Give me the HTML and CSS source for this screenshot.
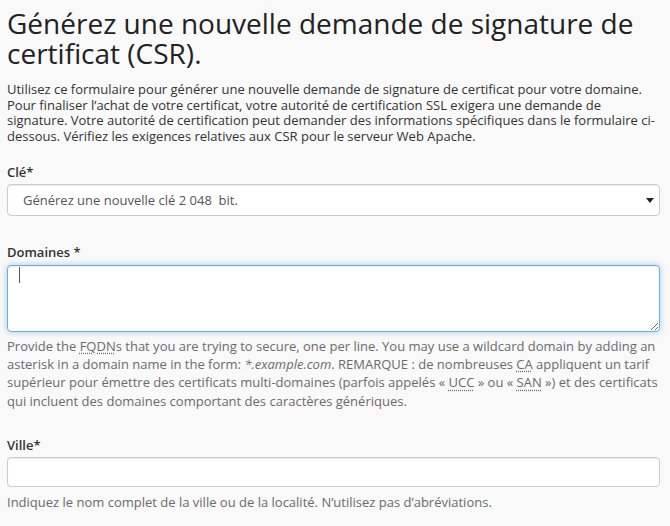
FILE: index.html
```html
<!DOCTYPE html>
<html lang="fr">
<head>
<meta charset="utf-8">
<title>CSR</title>
<link rel="stylesheet" href="styles.css">
</head>
<body>
<div class="page">
  <h1 class="title">Générez une nouvelle demande de signature de certificat (CSR).</h1>
  <p class="intro">Utilisez ce formulaire pour générer une nouvelle demande de signature de certificat pour votre domaine. Pour finaliser l’achat de votre certificat, votre autorité de certification SSL exigera une demande de signature. Votre autorité de certification peut demander des informations spécifiques dans le formulaire ci-dessous. Vérifiez les exigences relatives aux CSR pour le serveur Web Apache.</p>

  <div class="field field-key">
    <label class="label" for="key">Clé*</label>
    <div class="select-wrap">
      <select id="key" class="control select">
        <option>Générez une nouvelle clé 2 048&nbsp; bit.</option>
      </select>
    </div>
  </div>

  <div class="field field-domains">
    <label class="label" for="domains">Domaines *</label>
    <div class="textarea-wrap">
      <textarea id="domains" class="control textarea focused"></textarea>
      <span class="caret"></span>
    </div>
    <div class="help help-domains">Provide the <abbr title="Fully Qualified Domain Name">FQDN</abbr>s that you are trying to secure, one per line. You may use a wildcard domain by adding an asterisk in a domain name in the form: <em>*.example.com</em>. REMARQUE : de nombreuses <abbr title="Certificate Authority">CA</abbr> appliquent un tarif supérieur pour émettre des certificats multi-domaines (parfois appelés « <abbr title="Unified Communications Certificate">UCC</abbr> » ou « <abbr title="Subject Alternative Name">SAN</abbr> ») et des certificats qui incluent des domaines comportant des caractères génériques.</div>
  </div>

  <div class="field field-city">
    <label class="label" for="city">Ville*</label>
    <input id="city" class="control input" type="text">
    <div class="help help-city">Indiquez le nom complet de la ville ou de la localité. N’utilisez pas d’abréviations.</div>
  </div>
</div>
</body>
</html>
```

FILE: styles.css
```css
html, body {
  margin: 0;
  padding: 0;
  background: #f9f9f9;
}

body {
  font-family: "Open Sans", "Noto Sans", sans-serif;
  color: #333;
}

.page {
  padding: 8px 10px 0 7px;
}

.title {
  margin: 0;
  font-size: 28px;
  line-height: 30px;
  font-weight: 400;
  color: #222;
}

.intro {
  margin: 14px 0 0;
  font-size: 13px;
  line-height: 15.7px;
  color: #333;
}

.field {
  display: flex;
  flex-direction: column;
}

.field-key {
  margin-top: 18px;
}

.field-domains {
  margin-top: 27px;
}

.field-city {
  margin-top: 26px;
}

.label {
  font-size: 13px;
  line-height: 18px;
  font-weight: 600;
  color: #333;
  margin-bottom: 3px;
}

.control {
  box-sizing: border-box;
  width: 100%;
  margin: 0;
  background: #fff;
  border: 1px solid #ccc;
  border-radius: 4px;
  font-family: inherit;
  font-size: 13px;
  color: #555;
  box-shadow: inset 0 1px 1px rgba(0,0,0,.075);
}

.select-wrap {
  position: relative;
}

.select {
  height: 32px;
  padding: 0 30px 0 15px;
  -webkit-appearance: none;
  appearance: none;
}

.select-wrap::after {
  content: "";
  position: absolute;
  right: 6px;
  top: 14px;
  border-left: 4px solid transparent;
  border-right: 4px solid transparent;
  border-top: 5px solid #222;
}

.textarea-wrap {
  position: relative;
  display: flex;
  margin-top: 1px;
}

.textarea {
  height: 67px;
  padding: 6px 10px;
  resize: vertical;
  display: block;
}

.textarea.focused {
  border-color: #66afe9;
  outline: 0;
  box-shadow: inset 0 1px 1px rgba(0,0,0,.075), 0 0 6px rgba(102,175,233,.6);
}

.caret {
  position: absolute;
  left: 12px;
  top: 2px;
  width: 1px;
  height: 16px;
  background: #555;
}

.input {
  height: 30px;
  padding: 0 10px;
}

.help {
  margin-top: 5px;
  font-size: 13px;
  line-height: 18.3px;
  color: #6b6b6b;
}

.help-city {
  margin-top: 6px;
}

.help abbr {
  text-decoration: underline dotted;
  text-underline-offset: 2px;
  cursor: help;
}

.help em {
  font-style: italic;
}
```
